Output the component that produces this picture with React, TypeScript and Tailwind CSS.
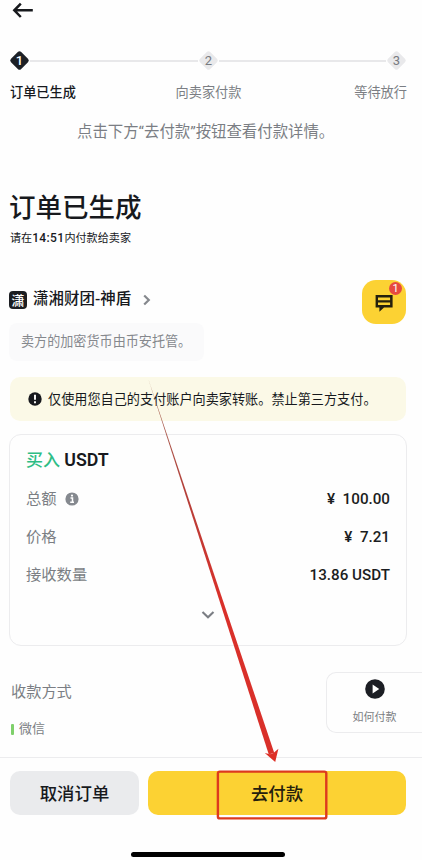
import React from "react";

const steps = [
  { n: "1", label: "订单已生成", active: true, align: "text-left font-medium text-[#17191d]" },
  { n: "2", label: "向卖家付款", active: false, align: "text-center" },
  { n: "3", label: "等待放行", active: false, align: "text-right" },
];

function StepMarker({ n, active }: { n: string; active: boolean }) {
  return (
    <svg width="21" height="21" viewBox="0 0 21 21" className="shrink-0">
      <rect x="3.3" y="3.3" width="14.4" height="14.4" rx="2.4" transform="rotate(45 10.5 10.5)" fill={active ? "#1c2026" : "#e9e9eb"} />
      <text x="10.5" y="15" textAnchor="middle" fontSize="13" fontWeight={active ? "500" : "400"} fill={active ? "#fff" : "#777a80"}>
        {n}
      </text>
    </svg>
  );
}

function Steps() {
  return (
    <div className="h-[54px] pl-[9px] pr-[15px]">
      <div className="flex h-[21px] items-center">
        <StepMarker n={steps[0].n} active />
        <div className="h-[2px] flex-1 bg-[#e8e8ea]" />
        <StepMarker n={steps[1].n} active={false} />
        <div className="h-[2px] flex-1 bg-[#e8e8ea]" />
        <StepMarker n={steps[2].n} active={false} />
      </div>
      <div className="mt-[12px] grid grid-cols-3 pl-[1px] text-[13.2px] leading-5 text-[#7b7e84]">
        {steps.map((s) => (
          <span key={s.n} className={s.align}>
            {s.label}
          </span>
        ))}
      </div>
    </div>
  );
}

function Row({ label, value, info }: { label: string; value: string; info?: boolean }) {
  return (
    <div className="flex h-[38px] items-center justify-between">
      <span className="flex items-center gap-[8px] text-[15.3px] text-[#7b7e84]">
        {label}
        {info && (
          <svg width="14" height="14" viewBox="0 0 14 14">
            <circle cx="7" cy="7" r="6.6" fill="#85898f" />
            <path d="M5.5 6h2v4M5.2 10.2h3.8" stroke="#fff" strokeWidth="1.5" fill="none" />
            <circle cx="7" cy="3.6" r="1.1" fill="#fff" />
          </svg>
        )}
      </span>
      <span className="whitespace-pre text-[15.2px] font-medium text-[#1b1d21]">{value}</span>
    </div>
  );
}

export default function App() {
  return (
    <div className="relative flex h-[860px] w-[422px] flex-col overflow-hidden bg-[#fefefe] font-[Roboto,'Noto_Sans_CJK_SC',sans-serif] text-[#17191d]">
      <header className="h-[50px] pl-[12px]">
        <svg width="22" height="20" viewBox="0 0 22 20" fill="none" stroke="#17191d" strokeWidth="2.5">
          <path d="M20.8 10.3H2.8M8.8 3.6L2.3 10.3l6.5 6.7" />
        </svg>
      </header>

      <Steps />

      <p className="mt-[16px] pl-[77px] text-[15.4px] leading-6 text-[#7b7e84]">点击下方“去付款”按钮查看付款详情。</p>

      <h1 className="mt-[46px] pl-[9px] text-[26.5px] font-medium leading-9">订单已生成</h1>
      <p className="mt-[2px] pl-[10px] text-[11.1px] leading-5">
        请在<b className="text-[12px] font-medium tracking-[0.35px]">14:51</b>内付款给卖家
      </p>

      <section className="mt-[31px] flex h-[45px] items-start justify-between pl-[9px] pr-[16px]">
        <div className="flex h-[40px] items-center">
          <span className="flex size-[18px] items-center justify-center rounded-[4px] bg-[#1c1e22] text-[13px] font-medium leading-none text-white">潇</span>
          <span className="ml-[6px] text-[15.5px] font-medium">潇湘财团-神盾</span>
          <svg width="8" height="12" viewBox="0 0 8 12" fill="none" stroke="#85888d" strokeWidth="2.2" className="ml-[12px]">
            <path d="M1.2 1.5L5.8 6l-4.6 4.5" />
          </svg>
        </div>
        <div className="relative flex size-[44px] items-center justify-center rounded-[14px] bg-[#fcd233]">
          <svg width="18" height="18" viewBox="0 0 18 18" className="mt-[1px]">
            <path fillRule="evenodd" d="M.6 1h17v12.6H9L4.4 17.8v-4.2H.6zM3 3.6v2.6h12.1V3.6zM3 8.4V11h12.1V8.4z" fill="#25200d" />
          </svg>
          <span className="absolute right-[4px] top-[2px] flex size-[13px] items-center justify-center rounded-full bg-[#e64a40] text-[11px] leading-none text-white">1</span>
        </div>
      </section>

      <div className="ml-[9px] mt-[-2px] flex h-[38px] w-[195px] items-center rounded-[8px] bg-[#fafafb] pl-[12px] text-[13.1px] text-[#85888d]">
        卖方的加密货币由币安托管。
      </div>

      <div className="ml-[10px] mr-[16px] mt-[16px] flex h-[44px] shrink-0 items-center rounded-[10px] bg-[#fbf9e7] pl-[18px] text-[13.15px]">
        <svg width="14" height="14" viewBox="0 0 14 14" className="mr-[6px]">
          <circle cx="7" cy="7" r="6.7" fill="#17191d" />
          <path d="M7 2.8v5M7 9.2v2" stroke="#fff" strokeWidth="1.9" />
        </svg>
        <span className="pt-[2px]">仅使用您自己的支付账户向卖家转账。禁止第三方支付。</span>
      </div>

      <section className="ml-[9px] mr-[15px] mt-[13px] flex h-[212px] shrink-0 flex-col rounded-[12px] border border-[#ececee] px-4 pt-[11px]">
        <h2 className="h-[34px] text-[17px] font-medium leading-[27px]">
          <span className="text-[#2ebd85]">买入</span> <span className="text-[17.8px] font-semibold">USDT</span>
        </h2>
        <Row label="总额" value="¥  100.00" info />
        <Row label="价格" value="¥  7.21" />
        <Row label="接收数量" value="13.86 USDT" />
        <svg width="14" height="10" viewBox="0 0 14 10" fill="none" stroke="#7b7e84" strokeWidth="2.1" className="mt-[16px] self-center">
          <path d="M1.5 2L7 7.3 12.5 2" />
        </svg>
      </section>

      <section className="mt-[26px] flex h-[85px] shrink-0 justify-between">
        <div className="pl-[11px]">
          <div className="mt-[8px] text-[15.2px] leading-6 text-[#7b7e84]">收款方式</div>
          <div className="mt-[15px] flex items-center text-[13px] leading-5 text-[#7b7e84]">
            <i className="mr-[5px] h-[11px] w-[3px] rounded-[1px] bg-[#7fd06b]" />
            微信
          </div>
        </div>
        <div className="flex h-[61px] w-[96px] flex-col items-center rounded-l-[10px] border border-r-0 border-[#ececee] pt-[6px]">
          <svg width="20" height="20" viewBox="0 0 20 20">
            <circle cx="10" cy="10" r="9.8" fill="#1c1e24" />
            <path d="M7.6 5.4L14.2 10l-6.6 4.6z" fill="#fff" />
          </svg>
          <span className="mt-[11px] text-[11px] leading-4 text-[#7b7e84]">如何付款</span>
        </div>
      </section>

      <footer className="flex flex-1 flex-col border-t border-[#ececee] pt-[13px]">
        <div className="flex h-[44px] gap-[9px] pl-[10px] pr-[16px] text-[17.4px] font-medium">
          <button className="w-[129px] rounded-[10px] bg-[#eaebed] pt-[2px]">取消订单</button>
          <button className="flex-1 rounded-[10px] bg-[#fcd233] pt-[2px] text-[#25200d]">去付款</button>
        </div>
        <div className="ml-[131px] mt-[37px] h-[5px] w-[154px] rounded-full bg-black" />
      </footer>

      <svg width="422" height="860" viewBox="0 0 422 860" className="pointer-events-none absolute left-0 top-0">
        <defs>
          <linearGradient id="shaft" gradientUnits="userSpaceOnUse" x1="148" y1="380" x2="220" y2="600">
            <stop offset="0" stopColor="#a06a58" />
            <stop offset="0.5" stopColor="#b3403a" />
            <stop offset="1" stopColor="#d9302a" />
          </linearGradient>
        </defs>
        <path d="M148.3 379L268.8 754.5 274.2 752.8z" fill="url(#shaft)" />
        <path d="M264.8 753L270 754.2 273.5 753 278.4 748.8 275.2 762z" fill="#dd2f26" />
        <rect x="217.9" y="771.6" width="108.4" height="46.8" rx="2" fill="none" stroke="#dd3a1e" strokeWidth="2.4" />
      </svg>
    </div>
  );
}
